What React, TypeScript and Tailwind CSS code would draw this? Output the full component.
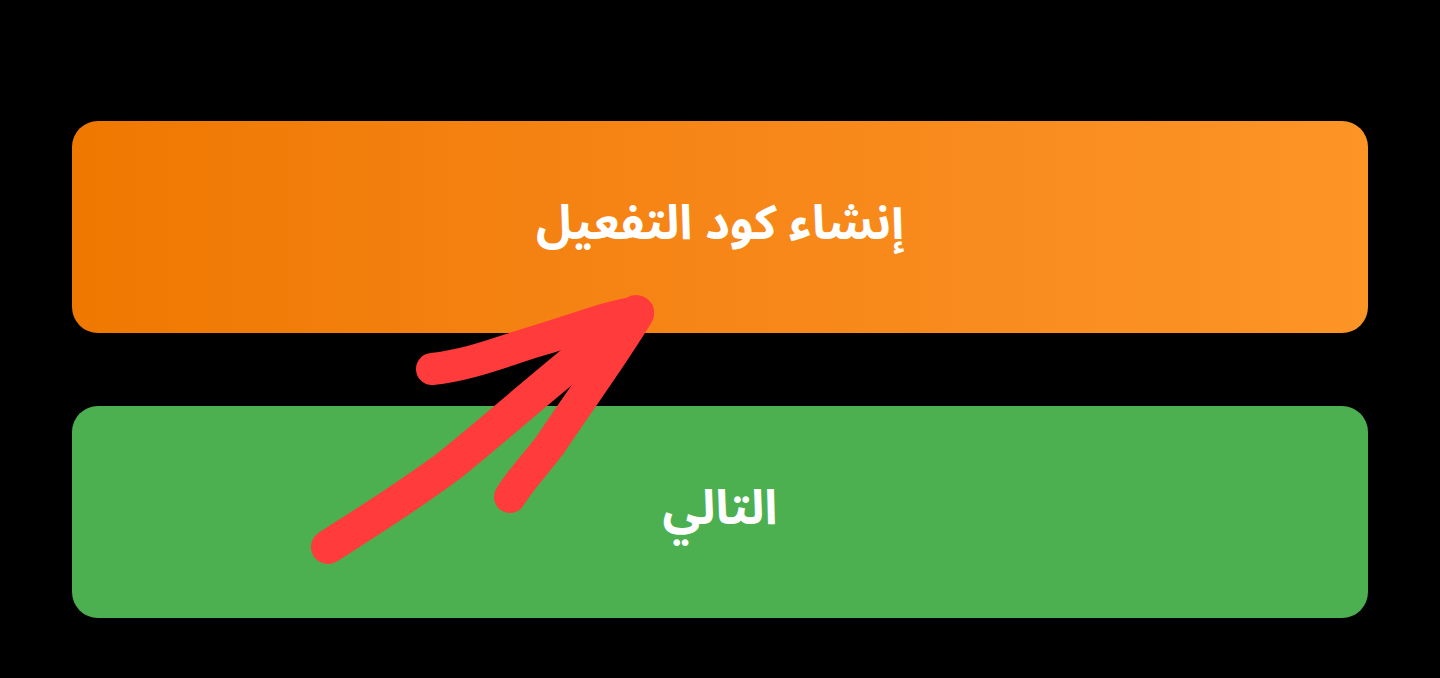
export default function App() {
  return (
    <div className="relative h-[678px] w-full overflow-hidden bg-black" dir="rtl">
      <div className="flex flex-col gap-[73px] px-[72px] pt-[121px]">
        <button className="flex h-[212px] w-full items-center justify-center rounded-[26px] bg-gradient-to-l from-[#fd9426] to-[#ef7800] text-[48px] font-bold text-white [font-family:'Noto_Sans_Arabic','Noto_Sans','DejaVu_Sans',sans-serif]">
          <span className="-translate-y-[3px]">إنشاء كود التفعيل</span>
        </button>
        <button className="flex h-[212px] w-full items-center justify-center rounded-[26px] bg-[#4caf50] text-[48px] font-bold text-white [font-family:'Noto_Sans_Arabic','Noto_Sans','DejaVu_Sans',sans-serif]">
          <span className="-translate-y-[3px]">التالي</span>
        </button>
      </div>

      {/* hand-drawn annotation arrow */}
      <svg
        className="pointer-events-none absolute inset-0"
        width="1440"
        height="678"
        viewBox="0 0 1440 678"
        fill="none"
      >
        <g stroke="#ff3b3b" strokeLinecap="round" strokeLinejoin="round">
          <path d="M328 547 C370 520 410 495 450 465 C500 425 560 370 636 312" strokeWidth="34" />
          <path d="M432 369 C470 365 500 352 540 340 C580 328 610 316 638 312" strokeWidth="32" />
          <path d="M638 314 C610 360 580 400 550 445 C535 465 520 480 510 497" strokeWidth="32" />
        </g>
      </svg>
    </div>
  );
}
